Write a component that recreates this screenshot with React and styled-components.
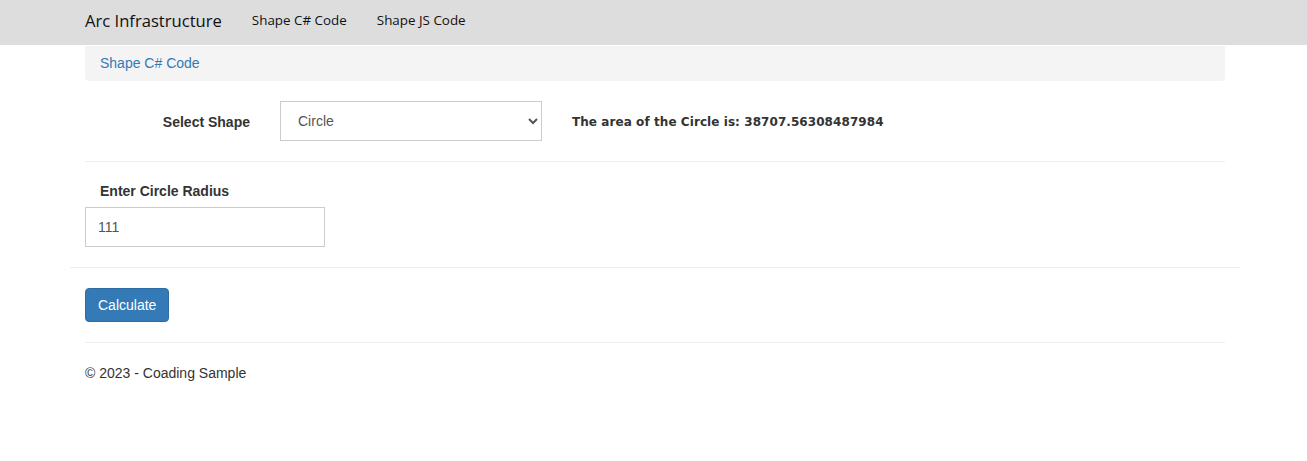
import React from "react";
import styled, { createGlobalStyle } from "styled-components";

const Global = createGlobalStyle`
  html, body { margin: 0; padding: 0; background: #fff; }
  body {
    font-family: "Liberation Sans", Arial, sans-serif;
    font-size: 14px;
    line-height: 1.42857;
    color: #333;
  }
  * { box-sizing: border-box; }
`;

const Navbar = styled.nav`
  height: 45px;
  background: #dddddd;
  display: flex;
  align-items: center;
  padding-left: 85px;
  padding-bottom: 4px;
  font-family: "Open Sans", "Noto Sans", sans-serif;
  color: #111;
`;

const Brand = styled.a`
  font-size: 16.6px;
  color: #111;
  text-decoration: none;
  margin-right: 30px;
`;

const NavLink = styled.a`
  font-size: 13.4px;
  color: #111;
  text-decoration: none;
  margin-right: 30px;
`;

const Container = styled.div`
  width: 1140px;
  margin-left: 85px;
`;

const Breadcrumb = styled.div`
  margin-top: 1px;
  height: 35px;
  background: #f4f4f4;
  border-radius: 0 0 4px 4px;
  padding: 0 15px;
  display: flex;
  align-items: center;
  color: #337ab7;
`;

const ShapeRow = styled.div`
  display: flex;
  align-items: center;
  margin-top: 20px;
  height: 40px;
`;

const Label = styled.label`
  font-weight: bold;
  width: ${(p) => p.$width || "auto"};
  text-align: ${(p) => p.$align || "left"};
  padding-right: ${(p) => p.$pr || "0"};
  padding-left: ${(p) => p.$pl || "0"};
  padding-top: ${(p) => p.$pt || "0"};
  display: block;
`;

const Select = styled.select`
  width: 262px;
  height: 40px;
  border: 1px solid #ccc;
  background: #fff;
  font-family: "Liberation Sans", Arial, sans-serif;
  font-size: 14px;
  color: #555;
  padding-left: 13px;
  border-radius: 0;
  outline: none;
`;

const Result = styled.span`
  margin-left: 30px;
  padding-top: 4px;
  font-family: "DejaVu Sans", sans-serif;
  font-weight: bold;
  font-size: 12px;
  letter-spacing: 0.07px;
  color: #333;
`;

const Rule = styled.hr`
  border: 0;
  border-top: 1px solid #eee;
  margin: ${(p) => p.$m || "20px 0"};
  margin-left: ${(p) => p.$ml || "0"};
  margin-right: ${(p) => p.$mr || "0"};
`;

const FieldGroup = styled.div`
  display: flex;
  flex-direction: column;
  gap: 5px;
  margin-top: 20px;
`;

const Input = styled.input`
  width: 240px;
  height: 40px;
  border: 1px solid #ccc;
  padding-left: 12px;
  font-family: "Liberation Sans", Arial, sans-serif;
  font-size: 14px;
  color: #555;
  outline: none;
`;

const ButtonRow = styled.div`
  margin-top: 20px;
`;

const Button = styled.button`
  height: 34px;
  padding: 0 12px;
  background: #337ab7;
  border: 1px solid #2e6da4;
  border-radius: 4px;
  color: #fff;
  font-family: "Liberation Sans", Arial, sans-serif;
  font-size: 14px;
`;

const Footer = styled.footer`
  margin-top: 21px;
`;

export default function App() {
  return (
    <>
      <Global />
      <Navbar>
        <Brand href="#">Arc Infrastructure</Brand>
        <NavLink href="#">Shape C# Code</NavLink>
        <NavLink href="#">Shape JS Code</NavLink>
      </Navbar>
      <Container>
        <Breadcrumb>Shape C# Code</Breadcrumb>
        <ShapeRow>
          <Label $width="195px" $align="right" $pr="30px" $pt="4px">Select Shape</Label>
          <Select defaultValue="Circle">
            <option>Circle</option>
            <option>Rectangle</option>
            <option>Triangle</option>
          </Select>
          <Result>The area of the Circle is: 38707.56308487984</Result>
        </ShapeRow>
        <Rule $m="20px 0 0" />
        <FieldGroup>
          <Label $pl="15px">Enter Circle Radius</Label>
          <Input defaultValue="111" />
        </FieldGroup>
      </Container>
      <Rule $m="20px 0 0" $ml="70px" $mr="67px" />
      <Container>
        <ButtonRow>
          <Button>Calculate</Button>
        </ButtonRow>
        <Rule $m="20px 0 0" />
        <Footer>© 2023 - Coading Sample</Footer>
      </Container>
    </>
  );
}
